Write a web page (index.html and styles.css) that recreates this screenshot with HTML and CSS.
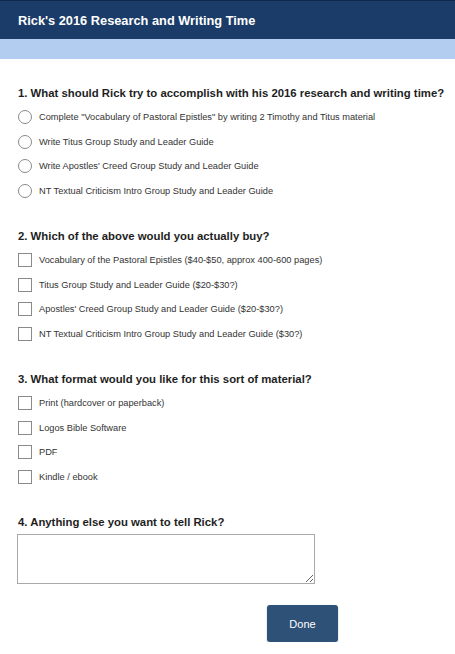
FILE: index.html
```html
<!DOCTYPE html>
<html>
<head>
<meta charset="utf-8">
<link rel="stylesheet" href="styles.css">
</head>
<body>
<header class="topbar"><h1 class="title">Rick's 2016 Research and Writing Time</h1></header>
<div class="band"></div>
<main class="survey">
  <section class="question">
    <h2 class="qtitle">1. What should Rick try to accomplish with his 2016 research and writing time?</h2>
    <ul class="options">
      <li class="option"><span class="radio"></span><span class="label">Complete "Vocabulary of Pastoral Epistles" by writing 2 Timothy and Titus material</span></li>
      <li class="option"><span class="radio"></span><span class="label">Write Titus Group Study and Leader Guide</span></li>
      <li class="option"><span class="radio"></span><span class="label">Write Apostles' Creed Group Study and Leader Guide</span></li>
      <li class="option"><span class="radio"></span><span class="label">NT Textual Criticism Intro Group Study and Leader Guide</span></li>
    </ul>
  </section>
  <section class="question">
    <h2 class="qtitle">2. Which of the above would you actually buy?</h2>
    <ul class="options">
      <li class="option"><span class="check"></span><span class="label">Vocabulary of the Pastoral Epistles ($40-$50, approx 400-600 pages)</span></li>
      <li class="option"><span class="check"></span><span class="label">Titus Group Study and Leader Guide ($20-$30?)</span></li>
      <li class="option"><span class="check"></span><span class="label">Apostles' Creed Group Study and Leader Guide ($20-$30?)</span></li>
      <li class="option"><span class="check"></span><span class="label">NT Textual Criticism Intro Group Study and Leader Guide ($30?)</span></li>
    </ul>
  </section>
  <section class="question">
    <h2 class="qtitle">3. What format would you like for this sort of material?</h2>
    <ul class="options">
      <li class="option"><span class="check"></span><span class="label">Print (hardcover or paperback)</span></li>
      <li class="option"><span class="check"></span><span class="label">Logos Bible Software</span></li>
      <li class="option"><span class="check"></span><span class="label">PDF</span></li>
      <li class="option"><span class="check"></span><span class="label">Kindle / ebook</span></li>
    </ul>
  </section>
  <section class="question last">
    <h2 class="qtitle">4. Anything else you want to tell Rick?</h2>
    <textarea class="comment"></textarea>
  </section>
  <div class="actions"><button class="done">Done</button></div>
</main>
</body>
</html>
```
FILE: styles.css
```css
html, body {
  margin: 0;
  padding: 0;
  background: #ffffff;
  font-family: "Liberation Sans", Arial, sans-serif;
  color: #222222;
}
.topbar {
  height: 38px;
  background: #1b3c68;
  border-top: 1px solid #10284a;
  display: flex;
  align-items: center;
  padding: 0 18px;
}
.title {
  margin: 0;
  font-size: 12.8px;
  font-weight: bold;
  color: #ffffff;
}
.band {
  height: 20px;
  background: #b3cdf1;
}
.survey {
  padding: 27px 0 0 17px;
}
.question {
  margin-bottom: 26px;
}
.question.last {
  margin-bottom: 0;
}
.qtitle {
  margin: 0 0 5px 1px;
  font-size: 11.35px;
  line-height: 14px;
  font-weight: bold;
  color: #1e1e1e;
  white-space: nowrap;
}
.options {
  list-style: none;
  margin: 0;
  padding: 0;
}
.option {
  height: 24.5px;
  display: flex;
  align-items: center;
  font-size: 9.25px;
  color: #333333;
  white-space: nowrap;
}
.radio {
  width: 12px;
  height: 12px;
  border: 1px solid #8a8a8a;
  border-radius: 50%;
  margin-left: 1px;
  margin-right: 7px;
  flex: none;
}
.check {
  width: 12px;
  height: 12px;
  border: 1px solid #8a8a8a;
  margin-left: 1px;
  margin-right: 7px;
  flex: none;
}
.comment {
  display: block;
  box-sizing: border-box;
  width: 298px;
  height: 50px;
  margin: 5px 0 0 0;
  border: 1px solid #a9a9a9;
  resize: both;
}
.actions {
  padding: 21px 0 0 250px;
}
.done {
  width: 71px;
  height: 37px;
  border: none;
  border-radius: 3px;
  background: #2e5177;
  color: #ffffff;
  font-family: "Liberation Sans", Arial, sans-serif;
  font-size: 11px;
  box-shadow: 0 1px 2px rgba(0,0,0,0.25);
}
```
